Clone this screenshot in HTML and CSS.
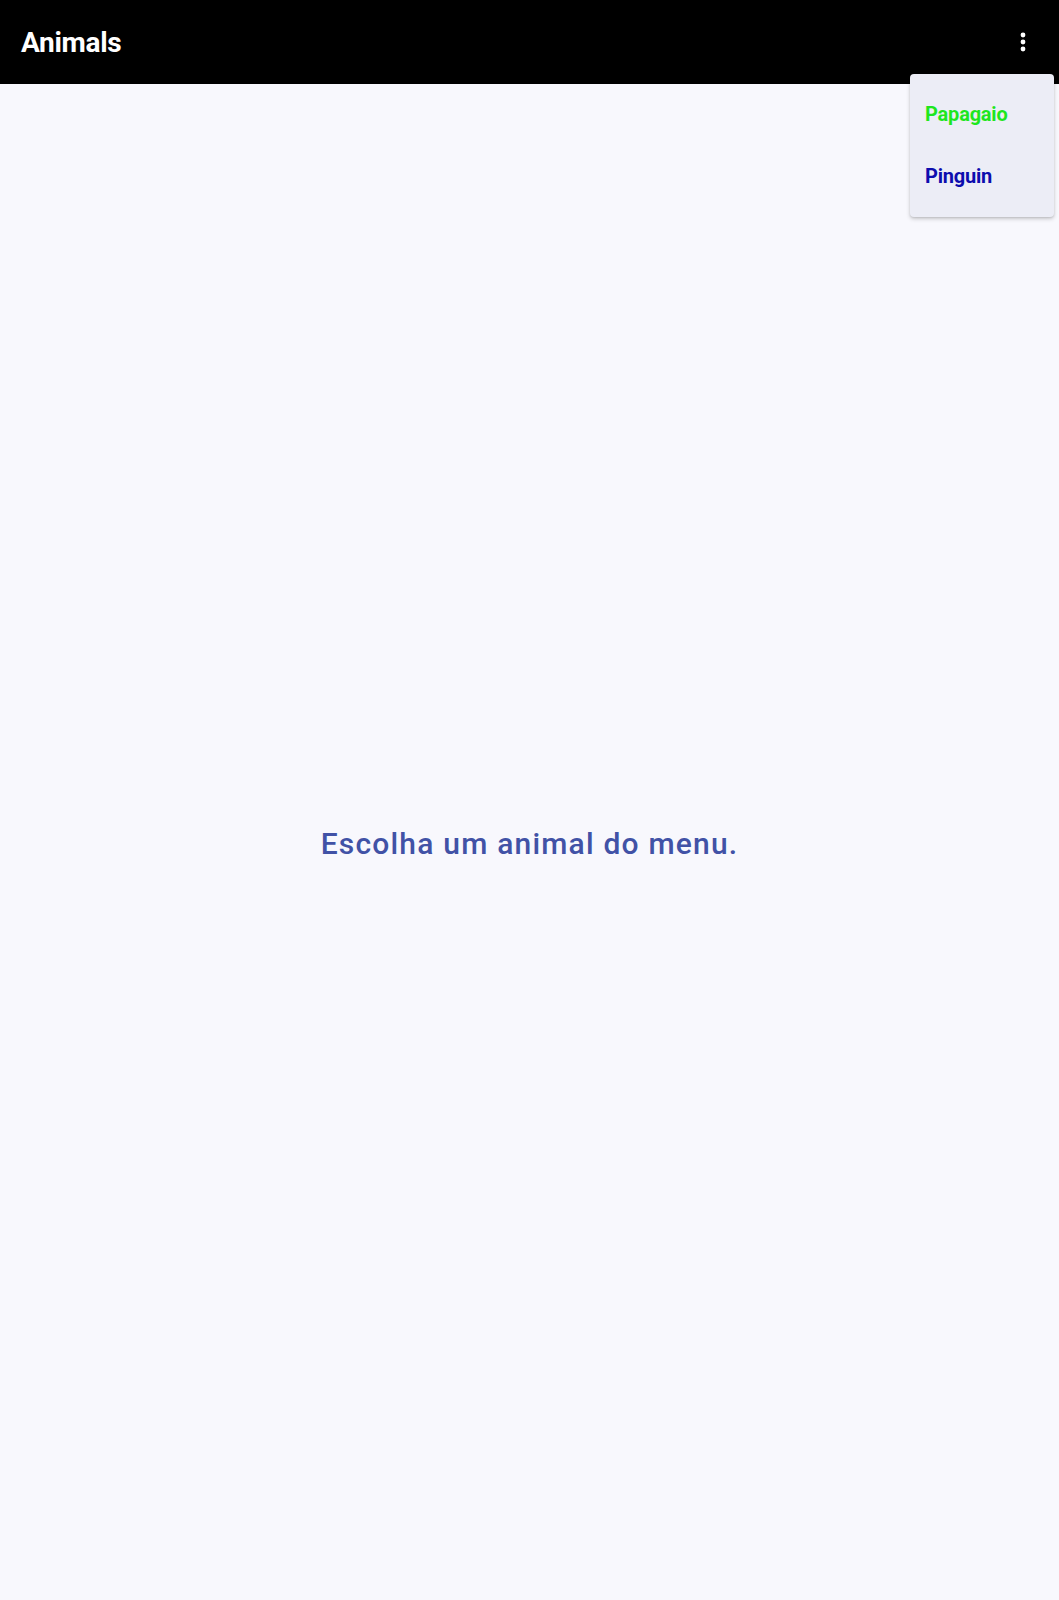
FILE: index.html
```html
<!DOCTYPE html>
<html lang="pt">
<head>
<meta charset="utf-8">
<title>Animals</title>
<link rel="stylesheet" href="styles.css">
</head>
<body>
<div class="app">
  <header class="toolbar">
    <h1 class="title">Animals</h1>
    <button class="overflow" aria-label="Mais opções">
      <svg width="24" height="24" viewBox="0 0 24 24"><circle cx="12" cy="5" r="2.4" fill="#fff"/><circle cx="12" cy="12" r="2.4" fill="#fff"/><circle cx="12" cy="19" r="2.4" fill="#fff"/></svg>
    </button>
    <ul class="menu">
      <li class="item papagaio">Papagaio</li>
      <li class="item pinguin">Pinguin</li>
    </ul>
  </header>
  <main class="content">
    <p class="hint">Escolha um animal do menu.</p>
  </main>
</div>
</body>
</html>
```
FILE: styles.css
```css
* { box-sizing: border-box; }
html, body { margin: 0; padding: 0; }
body {
  font-family: Roboto, "Noto Sans", sans-serif;
  background: #f8f8fd;
}
.app {
  display: flex;
  flex-direction: column;
  min-height: 1600px;
}
.toolbar {
  position: relative;
  height: 84px;
  background: #000;
  display: flex;
  align-items: center;
  justify-content: space-between;
  padding: 0 24px 0 21px;
}
.title {
  margin: 0;
  color: #fff;
  font-size: 28px;
  font-weight: 700;
  letter-spacing: -0.3px;
}
.overflow {
  background: none;
  border: 0;
  padding: 0;
  width: 24px;
  height: 24px;
  display: flex;
  align-items: center;
  justify-content: center;
}
.overflow svg { display: block; }
.menu {
  position: absolute;
  top: 74px;
  left: 910px;
  width: 144px;
  margin: 0;
  padding: 9px 0 10px;
  list-style: none;
  background: #ecedf6;
  border-radius: 4px;
  box-shadow: 0 2px 4px rgba(0,0,0,0.18), 0 1px 2px rgba(0,0,0,0.1);
  z-index: 2;
}
.item {
  height: 62px;
  display: flex;
  align-items: center;
  padding-left: 15px;
  font-size: 20px;
  font-weight: 700;
  letter-spacing: -0.2px;
}
.papagaio { color: #1ee61e; }
.pinguin { color: #0d0dae; }
.content {
  flex: 1;
  display: flex;
  align-items: center;
  justify-content: center;
  padding-top: 2px;
}
.hint {
  margin: 0;
  color: #4152a6;
  font-size: 30px;
  font-weight: 500;
  letter-spacing: 1.2px;
}
```
